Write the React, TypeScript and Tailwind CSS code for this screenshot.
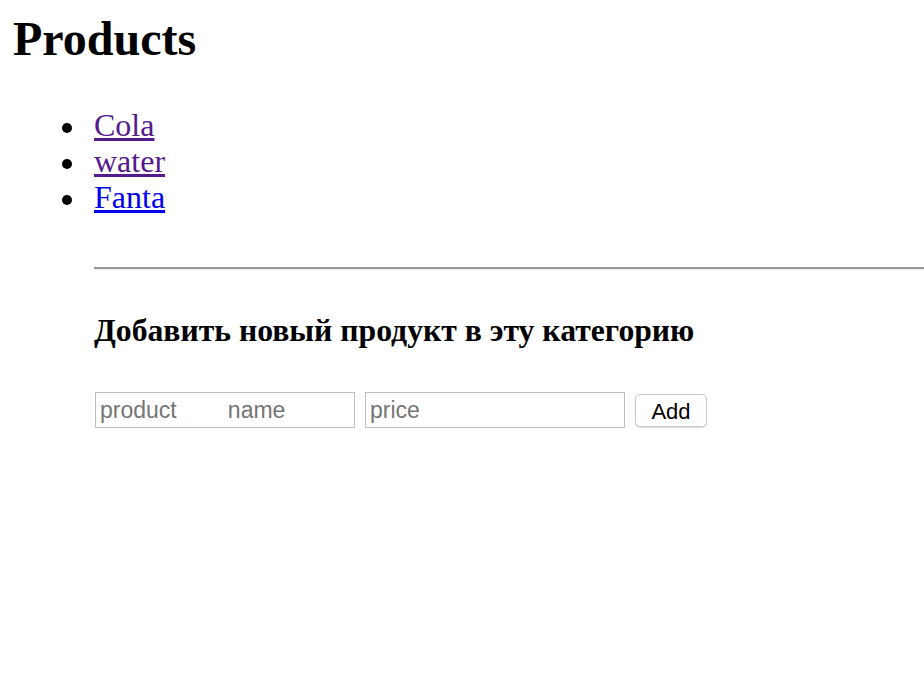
import React from "react";

const items = [
  { name: "Cola", color: "text-[#551a8b]" },
  { name: "water", color: "text-[#551a8b]" },
  { name: "Fanta", color: "text-[#0000ee]" },
];

export default function App() {
  return (
    <div className="min-h-[686px] w-[924px] overflow-hidden bg-white text-black" style={{ fontFamily: '"Liberation Serif", "Times New Roman", serif' }}>
      <div className="pl-[13px] pt-[11px]">
        <h1 className="text-[48px] font-bold leading-[55px]">Products</h1>
      </div>
      <ul className="mt-[41px] pl-[62px] text-[32px] leading-[36px]">
        {items.map((it) => (
          <li key={it.name} className="flex items-start">
            <span className="mr-[22px] mt-[16px] h-[10px] w-[10px] shrink-0 rounded-full bg-black" />
            <a href="#" className={`${it.color} underline`}>{it.name}</a>
          </li>
        ))}
      </ul>
      <div className="pl-[94px]">
        <div className="mt-[52px] h-[3px] w-[900px] border-t-2 border-b border-t-[#9a9a9a] border-b-[#ececec]" />
        <h3 className="mt-[43px] text-[31.7px] font-bold leading-[36px]">Добавить новый продукт в эту категорию</h3>
        <div className="mt-[43px] flex items-center gap-[10px] pl-[1px]" style={{ fontFamily: '"Liberation Sans", Arial, sans-serif' }}>
          <input
            className="h-[36px] w-[260px] border border-[#c0c0c0] px-[4px] text-[23px] placeholder:whitespace-pre placeholder:text-[#757575] outline-none"
            placeholder="product        name"
          />
          <input
            className="h-[36px] w-[260px] border border-[#c0c0c0] px-[4px] text-[23px] placeholder:text-[#757575] outline-none"
            placeholder="price"
          />
          <button className="h-[33px] w-[72px] rounded-[5px] border border-[#c8c8c8] bg-white text-[22px] text-black shadow-[0_1px_1px_rgba(0,0,0,0.15)]">
            Add
          </button>
        </div>
      </div>
    </div>
  );
}
